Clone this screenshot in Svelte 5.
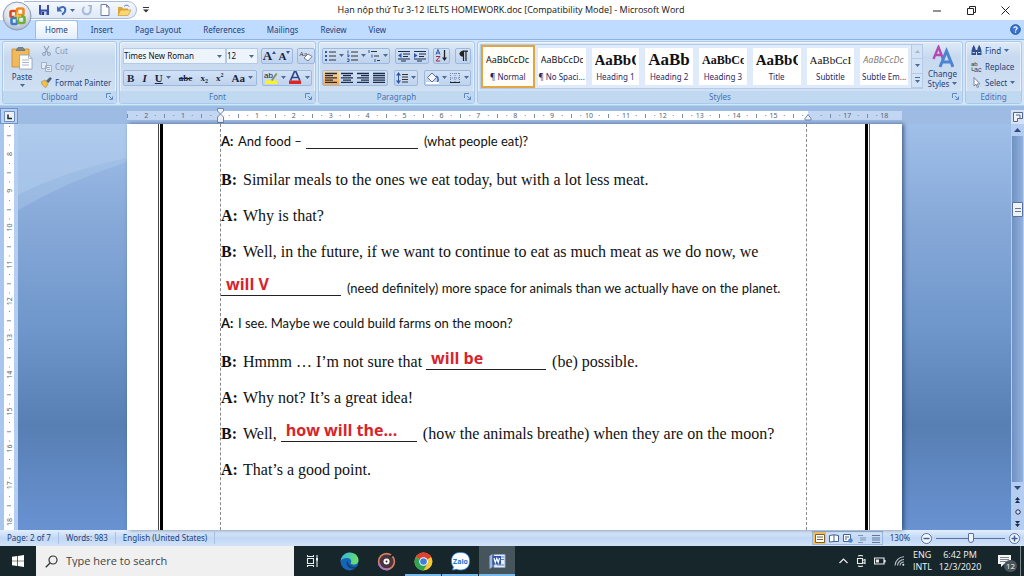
<script lang="ts">
  const tabs = ["Home", "Insert", "Page Layout", "References", "Mailings", "Review", "View"];

  const styles = [
    { sample: "AaBbCcDc", name: "¶ Normal", look: "plain" },
    { sample: "AaBbCcDc", name: "¶ No Spaci...", look: "plain" },
    { sample: "AaBbC", name: "Heading 1", look: "h1" },
    { sample: "AaBb", name: "Heading 2", look: "h2" },
    { sample: "AaBbCc", name: "Heading 3", look: "h3" },
    { sample: "AaBbC", name: "Title", look: "h1" },
    { sample: "AaBbCcI", name: "Subtitle", look: "sub" },
    { sample: "AaBbCcDc", name: "Subtle Em...", look: "em" },
  ];

  // one entry per centimetre, zero sits at the text margin
  const UNIT = 37;
  const hNumbers = [-2, -1, 1, 2, 3, 4, 5, 6, 7, 8, 9, 10, 11, 12, 13, 14, 15, 17, 18];
  const hTicks = Array.from({ length: 82 }, (_, i) => i - 10);
  const vNumbers = [8, 9, 10, 11, 12, 13, 14, 15, 16, 17, 18];
  const vTicks = Array.from({ length: 44 }, (_, i) => i);

  let activeTab = $state("Home");
  let activeStyle = $state(0);
  let font = $state("Times New Roman");
  let size = $state("12");
  let query = $state("");
  let zoom = $state(130);
</script>

{#snippet arrow()}
  <svg class="arrow" viewBox="0 0 5 3" width="5" height="3"><path d="M0 0h5L2.500 3z" fill="#4a6a9c" /></svg>
{/snippet}

{#snippet lines(rows: number[][])}
  <svg viewBox="0 0 14 12" width="14" height="12">
    {#each rows as [x, w], i}
      <path d="M{x} {1.5 + i * 2.2}h{w}" stroke="#1d2b4a" stroke-width="1.3" />
    {/each}
  </svg>
{/snippet}

{#snippet launcher(label: string)}
  <button class="launcher" aria-label={label}>
    <svg viewBox="0 0 7 7" width="7" height="7"><path d="M.5 5V.5H5M3 3l3 3M6.500 3.500v3h-3" fill="none" stroke="#5f86bd" /></svg>
  </button>
{/snippet}

<div class="window">
  <header class="titlebar">
    <button class="office" aria-label="Office Button">
      <svg viewBox="0 0 30 30" width="30" height="30">
        <defs>
          <radialGradient id="orb" cx=".5" cy=".3" r=".7">
            <stop offset="0" stop-color="#fff" />
            <stop offset=".6" stop-color="#dfe5ee" />
            <stop offset="1" stop-color="#a9b6cb" />
          </radialGradient>
        </defs>
        <circle cx="15" cy="15" r="14" fill="url(#orb)" stroke="#8b9bb8" />
        <g fill="none" stroke-width="2.6">
          <rect x="8.500" y="10" width="6" height="6" rx="1.500" stroke="#dd4b1c" />
          <rect x="15" y="7.500" width="6.500" height="6.500" rx="1.500" stroke="#ef8a22" />
          <rect x="9.500" y="17" width="5.500" height="6" rx="1.500" stroke="#3c7cc8" />
          <rect x="16" y="15.500" width="6.500" height="6.500" rx="1.500" stroke="#6fae3a" />
        </g>
        <path d="M12 15h7M15.500 11v8" stroke="#f5c64a" stroke-width="1.400" />
      </svg>
    </button>
    <div class="left">
      <div class="quick">
        <button aria-label="Save">
          <svg viewBox="0 0 12 12" width="12" height="12"><path d="M1 1h10v10H2L1 10z" fill="#3a4fa8" /><path d="M3 1h6v4.500H3z" fill="#e8eefc" /><path d="M3.500 7.500h5V11h-5z" fill="#c6d2ee" /><path d="M4 8h2v3H4z" fill="#27387f" /></svg>
        </button>
        <button aria-label="Undo">
          <svg viewBox="0 0 12 12" width="12" height="12"><path d="M2.500 5.500C5 1.800 9.500 2.500 9.300 6c-.1 2-1.500 3.600-3.300 4.500" fill="none" stroke="#3f6bb8" stroke-width="2" /><path d="M1 2v5.500h5.500z" fill="#3f6bb8" /></svg>
          {@render arrow()}
        </button>
        <button aria-label="Repeat">
          <svg viewBox="0 0 12 12" width="12" height="12"><path d="M3.500 3A4 4 0 1 0 9 4" fill="none" stroke="#a9bad6" stroke-width="2" /><path d="M6.500 1H11v4.500z" fill="#a9bad6" /></svg>
        </button>
        <button aria-label="New">
          <svg viewBox="0 0 12 12" width="12" height="12"><path d="M2 .5h5.500L10 3v8.500H2z" fill="#fff" stroke="#6c7f9f" /><path d="M7.500.5V3H10" fill="none" stroke="#6c7f9f" /></svg>
        </button>
        <button aria-label="Open">
          <svg viewBox="0 0 14 12" width="14" height="12"><path d="M1 3h4l1 1.500h5V11H1z" fill="#e0a536" /><path d="M3.500 6H14l-3 5.500H1z" fill="#fbd774" stroke="#c98d22" stroke-width=".6" /><path d="M7 2.500c2-2 4-1.500 5 0" fill="none" stroke="#4c6ea8" /></svg>
        </button>
      </div>
      <button class="more" aria-label="Customize Quick Access Toolbar">
        <svg viewBox="0 0 6 6" width="6" height="6"><path d="M0 .5h6" stroke="#333" /><path d="M0 2.500h6L3 5.500z" fill="#333" /></svg>
      </button>
    </div>
    <h1>Hạn nộp thứ Tư 3-12 IELTS HOMEWORK.doc [Compatibility Mode] - Microsoft Word</h1>
    <div class="controls">
      <button aria-label="Minimize"><svg viewBox="0 0 9 9" width="9" height="9"><path d="M0 5h8" stroke="#222" /></svg></button>
      <button aria-label="Restore"><svg viewBox="0 0 9 9" width="9" height="9"><path d="M.5 2.500h6v6h-6zM2.500 2.500v-2h6v6h-2" fill="none" stroke="#222" /></svg></button>
      <button aria-label="Close"><svg viewBox="0 0 9 9" width="9" height="9"><path d="M.5.5l8 8M8.500.5l-8 8" stroke="#222" /></svg></button>
    </div>
  </header>

  <nav class="tabs">
    {#each tabs as tab}
      <button class:active={tab === activeTab} onclick={() => (activeTab = tab)}>{tab}</button>
    {/each}
    <button class="help" aria-label="Help">
      <svg viewBox="0 0 11 11" width="11" height="11"><circle cx="5.500" cy="5.500" r="4.800" fill="#3d74cf" stroke="#1f4fa0" /><path d="M3.800 4.300c.2-2 3.400-1.900 3.300 0 0 1.100-1.500 1.100-1.500 2.400M5.500 7.600v1.100" fill="none" stroke="#fff" stroke-width="1.200" /></svg>
    </button>
  </nav>

  <section class="ribbon">
    <div class="group clipboard">
      <div class="body">
        <button class="tall paste">
          <svg viewBox="0 0 22 24" width="22" height="24">
            <path d="M1 3h17v18H1z" fill="#f0b95a" stroke="#c88c34" stroke-width=".8" />
            <path d="M5 4.500 7 1.500h5l2 3z" fill="#7d8793" stroke="#555f6b" stroke-width=".6" />
            <path d="M8.500 9h9l3.500 3.500V23H8.500z" fill="#fff" stroke="#8e9bb3" stroke-width=".8" />
            <path d="M17.500 9v3.500H21M11 14h7M11 16.500h7M11 19h7" fill="none" stroke="#a8b6cd" />
          </svg>
          <span>Paste</span>
          {@render arrow()}
        </button>
        <div class="stack">
          <button class="dim">
            <svg viewBox="0 0 11 11" width="11" height="11"><path d="M3 1l4 7M8 1L4 8" stroke="#8fa0bc" stroke-width="1.200" /><circle cx="3" cy="9" r="1.500" fill="none" stroke="#8fa0bc" /><circle cx="8" cy="9" r="1.500" fill="none" stroke="#8fa0bc" /></svg>
            Cut
          </button>
          <button class="dim">
            <svg viewBox="0 0 11 11" width="11" height="11"><path d="M.5 1.500h5v6h-5zM4.500 4.500h6v6h-6z" fill="#e6ebf3" stroke="#9fb0ca" /><path d="M6 6.500h3M6 8.500h3" stroke="#9fb0ca" /></svg>
            Copy
          </button>
          <button>
            <svg viewBox="0 0 11 11" width="11" height="11"><path d="M0 5l4-2 3 4-2 3.500C3 10 1 8 0 5z" fill="#f0c14c" stroke="#a8772a" stroke-width=".5" /><path d="M5 4l4-4 2 1.500L7.500 6z" fill="#54637c" /></svg>
            Format Painter
          </button>
        </div>
      </div>
      <footer>Clipboard{@render launcher("Clipboard options")}</footer>
    </div>

    <div class="group font">
      <div class="body rows">
        <div class="row">
          <span class="combo">
            <select class="family" aria-label="Font" bind:value={font}>
              <option>Times New Roman</option>
              <option>Calibri</option>
            </select>
            {@render arrow()}
          </span>
          <span class="combo">
            <select class="points" aria-label="Font Size" bind:value={size}>
              <option>12</option>
              <option>14</option>
            </select>
            {@render arrow()}
          </span>
          <div class="set grow">
            <button class="glyph big" aria-label="Grow Font">A<svg viewBox="0 0 4 9" width="4" height="9"><path d="M0 3h4L2 0z" fill="#33518c" /></svg></button>
            <button class="glyph" aria-label="Shrink Font">A<svg viewBox="0 0 4 9" width="4" height="9"><path d="M0 0h4L2 3z" fill="#33518c" /></svg></button>
          </div>
          <div class="set">
            <button aria-label="Clear Formatting">
              <svg viewBox="0 0 14 13" width="14" height="13"><text x="0" y="7" font-size="7" font-family="Liberation Serif" fill="#333">Aa</text><path d="M5 9l4-4 4 2.500-4 4.500z" fill="#fff" stroke="#6d7c98" /></svg>
            </button>
          </div>
        </div>
        <div class="row spread">
          <div class="set wide">
            <button class="glyph"><b>B</b></button>
            <button class="glyph"><i>I</i></button>
            <button class="glyph"><u>U</u>{@render arrow()}</button>
            <button class="glyph small"><s>abc</s></button>
            <button class="glyph small">x<sub>2</sub></button>
            <button class="glyph small">x<sup>2</sup></button>
            <button class="glyph">Aa{@render arrow()}</button>
          </div>
          <div class="set">
            <button aria-label="Text Highlight Color">
              <svg viewBox="0 0 14 13" width="14" height="13"><path d="M1 9.500h12V13H1z" fill="#f7f22c" /><text x="0" y="7" font-size="8" font-family="Liberation Sans" fill="#222">ab</text><path d="M7 9l5-7 1.500 1-5 7z" fill="#8b8f5a" /></svg>
              {@render arrow()}
            </button>
            <button aria-label="Font Color">
              <svg viewBox="0 0 14 13" width="14" height="13"><path d="M1 9.500h12V13H1z" fill="#e02424" /><path d="M2.500 9.500 6.500.5h1.300l4 9M4.500 6.500h5.200" fill="none" stroke="#2e4686" stroke-width="1.700" /></svg>
              {@render arrow()}
            </button>
          </div>
        </div>
      </div>
      <footer>Font{@render launcher("Font options")}</footer>
    </div>

    <div class="group paragraph">
      <div class="body rows">
        <div class="row spread">
          <div class="set">
            <button aria-label="Bullets">
              <svg viewBox="0 0 12 12" width="12" height="12"><path d="M1 2h2M1 6h2M1 10h2" stroke="#2f55a4" stroke-width="2" /><path d="M5 2h7M5 6h7M5 10h7" stroke="#333" /></svg>{@render arrow()}
            </button>
            <button aria-label="Numbering">
              <svg viewBox="0 0 12 12" width="12" height="12"><path d="M2 .5v3M1 5h2v1.500H1.500M1 9h2v2.500H1" fill="none" stroke="#2f55a4" /><path d="M5 2h7M5 6h7M5 10h7" stroke="#333" /></svg>{@render arrow()}
            </button>
            <button aria-label="Multilevel List">
              <svg viewBox="0 0 12 12" width="12" height="12"><path d="M1 0v3M4 4.500v3M7 9v3" stroke="#2f55a4" /><path d="M3 1.500h6M6 6h5M9 10.500h3" stroke="#333" /></svg>{@render arrow()}
            </button>
          </div>
          <div class="set">
            <button aria-label="Decrease Indent">
              <svg viewBox="0 0 14 12" width="14" height="12"><path d="M1 1.500h12M6 4h7M6 6.500h5M1 9h12M4 11h5" stroke="#1d2b4a" /><path d="M4.500 3v5L1 5.500z" fill="#2f55a4" /></svg>
            </button>
            <button aria-label="Increase Indent">
              <svg viewBox="0 0 14 12" width="14" height="12"><path d="M1 1.500h12M6 4h7M6 6.500h5M1 9h12M4 11h5" stroke="#1d2b4a" /><path d="M1 3v5l3.500-2.500z" fill="#2f55a4" /></svg>
            </button>
          </div>
          <div class="set">
            <button aria-label="Sort">
              <svg viewBox="0 0 13 13" width="13" height="13"><path d="M1 5.500 3 0.500l2 5M1.800 4h2.500" fill="none" stroke="#2f55a4" /><path d="M1 7.500h4l-4 4.500h4.200" fill="none" stroke="#a3283c" /><path d="M9.500 1v9" stroke="#222" stroke-width="1.300" /><path d="M7 8.500h5L9.500 12z" fill="#222" /></svg>
            </button>
          </div>
          <div class="set">
            <button aria-label="Show paragraph marks">
              <svg viewBox="0 0 12 12" width="12" height="12"><path d="M6.500 1v10M9 1v10M5.500 1.200H11" stroke="#222" stroke-width="1.200" fill="none" /><path d="M6.500.7v6C1 6.500 1.200.9 6.500.7z" fill="#222" /></svg>
            </button>
          </div>
        </div>
        <div class="row spread">
          <div class="set">
            <button class="on" aria-label="Align Left">{@render lines([[1, 12], [1, 8], [1, 12], [1, 8], [1, 12]])}</button>
            <button aria-label="Center">{@render lines([[1, 12], [3, 8], [1, 12], [3, 8], [1, 12]])}</button>
            <button aria-label="Align Right">{@render lines([[1, 12], [5, 8], [1, 12], [5, 8], [1, 12]])}</button>
            <button aria-label="Justify">{@render lines([[1, 12], [1, 12], [1, 12], [1, 12], [1, 12]])}</button>
          </div>
          <div class="set">
            <button aria-label="Line spacing">
              <svg viewBox="0 0 12 12" width="12" height="12"><path d="M2.500 1v10" stroke="#2f55a4" /><path d="M0 3.500h5L2.500 0zM0 8.500h5L2.500 12z" fill="#2f55a4" /><path d="M6 2.500h6M6 5h6M6 7.500h6M6 10h6" stroke="#333" /></svg>{@render arrow()}
            </button>
          </div>
          <div class="set">
            <button aria-label="Shading">
              <svg viewBox="0 0 13 12" width="13" height="12"><path d="M1.500 5.500 6 1l4.500 4.500L6 10z" fill="#f3f6fb" stroke="#5c6f92" /><path d="M10 4c2 1 2.500 3.500 1.500 6" fill="none" stroke="#3767b5" stroke-width="1.500" /><path d="M0 11h13" stroke="#fff" stroke-width="2" /></svg>{@render arrow()}
            </button>
            <button aria-label="Borders">
              <svg viewBox="0 0 12 12" width="12" height="12"><path d="M1.500 1v9M6 1v9M10.500 1v9M1 1.500h10M1 6h10" stroke="#7286ab" stroke-dasharray="1 1" /><path d="M1 10.500h10" stroke="#222" /></svg>{@render arrow()}
            </button>
          </div>
        </div>
      </div>
      <footer>Paragraph{@render launcher("Paragraph options")}</footer>
    </div>

    <div class="group styles">
      <div class="body">
        <div class="gallery">
          {#each styles as style, i}
            <button class:chosen={i === activeStyle} onclick={() => (activeStyle = i)}>
              <span class="sample {style.look}">{style.sample}</span>
              <span class="name">{style.name}</span>
            </button>
          {/each}
          <div class="scroller">
            <button aria-label="Previous styles"><svg viewBox="0 0 5 3" width="5" height="3"><path d="M0 3h5L2.500 0z" fill="#a9b4c8" /></svg></button>
            <button aria-label="Next styles">{@render arrow()}</button>
            <button aria-label="More styles"><svg viewBox="0 0 5 6" width="5" height="6"><path d="M0 .5h5" stroke="#4a6a9c" /><path d="M0 3h5L2.500 6z" fill="#4a6a9c" /></svg></button>
          </div>
        </div>
        <button class="tall change">
          <svg viewBox="0 0 22 24" width="22" height="24">
            <path d="M1.500 14 6.500 2l4.500 12M3 10h6.500" fill="none" stroke="#b44bb0" stroke-width="2.400" />
            <path d="M8 22 14.500 6 21 22M10.500 17h8" fill="none" stroke="#4c84cf" stroke-width="3" />
          </svg>
          <span>Change</span>
          <span>Styles {@render arrow()}</span>
        </button>
      </div>
      <footer>Styles{@render launcher("Styles options")}</footer>
    </div>

    <div class="group editing">
      <div class="body">
        <div class="stack">
          <button>
            <svg viewBox="0 0 11 11" width="11" height="11"><path d="M1.500 2h2.500l1 4v4H.5V6zM7 2h2.500l1 4v4H6V6z" fill="#31508c" /><path d="M2 .5h1.500v2H2zM7.500.5H9v2H7.500zM4 5h3v2H4z" fill="#31508c" /><path d="M1.500 7.500h2.500M7 7.500h2.500" stroke="#b8cdf0" /></svg>
            Find {@render arrow()}
          </button>
          <button>
            <svg viewBox="0 0 11 11" width="11" height="11"><text x="0" y="5" font-size="6" font-family="Liberation Sans" fill="#333">ab</text><text x="3" y="11" font-size="7" font-family="Liberation Sans" fill="#1f3d7d">ac</text><path d="M1 6.500v3h2" fill="none" stroke="#3a8a46" /></svg>
            Replace
          </button>
          <button>
            <svg viewBox="0 0 11 11" width="11" height="11"><path d="M3 .5v8.500l2-1.800L6.300 10.500l1.300-.6-1.300-3H9z" fill="#fff" stroke="#6d7c98" stroke-width=".9" /></svg>
            Select {@render arrow()}
          </button>
        </div>
      </div>
      <footer>Editing</footer>
    </div>
  </section>

  <div class="ruler-row">
    <button class="tabstop" aria-label="Left tab"><svg viewBox="0 0 11 11" width="11" height="11"><path d="M.5.5h10v10H.5z" fill="#eaf1fb" stroke="#6f8fbf" /><path d="M4 3.500v4h4" fill="none" stroke="#222" stroke-width="1.500" /></svg></button>
    <div class="hruler">
      <svg width="776" height="16" viewBox="0 0 776 16">
        <path d="M0 3h776v9H0z" fill="#c3d6f2" />
        <path d="M93 3h588v9H93z" fill="#fff" />
        {#each hTicks as t}
          {#if t % 4 !== 0}
            <path d="M{93 + (t * UNIT) / 4} {t % 2 ? 7 : 6}v{t % 2 ? 1 : 4}" stroke="#7d8da8" />
          {/if}
        {/each}
        {#each hNumbers as n}
          <text x={93 + n * 36.9} y="10" text-anchor="middle">{Math.abs(n)}</text>
        {/each}
        <path d="M90.500.5h6v2.500L93.500 6l3 3v5.500h-6V9l3-3-3-3z" fill="#eef3fb" stroke="#7286ab" />
        <path d="M678 10.500l3-4 3 4v1.500h-6z" fill="#eef3fb" stroke="#7286ab" />
      </svg>
    </div>
    <button class="view-ruler" aria-label="View Ruler"><svg viewBox="0 0 12 12" width="12" height="12"><path d="M1.500 1.500h9v6h-5v3h-4z" fill="#f1f5fb" stroke="#4f668f" /><path d="M4 4h4v3" fill="none" stroke="#4f668f" /></svg></button>
  </div>

  <main>
    <div class="vruler">
      <svg width="18" height="406" viewBox="0 0 18 406">
        {#each vTicks as t}
          {#if t % 4 !== 3}
            <path d="M{t % 2 ? 7 : 9} {2.5 + (t * UNIT) / 4}h{t % 2 ? 4 : 1}" stroke="#7d8da8" />
          {/if}
        {/each}
        {#each vNumbers as n, i}
          <text transform="translate(12 {30 + i * 36.8}) rotate(-90)" text-anchor="middle">{n}</text>
        {/each}
      </svg>
    </div>
    <div class="canvas">
      <svg class="swoosh" viewBox="0 0 109 90" width="109" height="90">
        <path d="M0 0h109v34Q45 48 0 71z" fill="#b9d4f0" opacity=".55" />
        <path d="M0 71Q45 48 109 34v4Q50 57 0 86z" fill="#b9d4f0" opacity=".3" />
      </svg>
      <article class="page">
        <div class="text">
          <p class="sans"><b>A:</b><span>And food –</span><span class="blank b1"></span><span class="after">(what people eat)?</span></p>
          <p><b>B:</b><span>Similar meals to the ones we eat today, but with a lot less meat.</span></p>
          <p><b>A:</b><span>Why is that?</span></p>
          <p><b>B:</b><span>Well, in the future, if we want to continue to eat as much meat as we do now, we</span></p>
          <p class="sans cont"><span class="blank b2"><em>will V</em></span><span class="after">(need definitely) more space for animals than we actually have on the planet.</span></p>
          <p class="sans"><b>A:</b><span>I see. Maybe we could build farms on the moon?</span></p>
          <p><b>B:</b><span>Hmmm … I’m not sure that</span><span class="blank b2"><em>will be</em></span><span class="after">(be) possible.</span></p>
          <p><b>A:</b><span>Why not? It’s a great idea!</span></p>
          <p><b>B:</b><span>Well,</span><span class="blank b3"><em>how will the...</em></span><span class="after">(how the animals breathe) when they are on the moon?</span></p>
          <p><b>A:</b><span>That’s a good point.</span></p>
        </div>
      </article>
    </div>
    <div class="scrollbar">
      <button aria-label="Scroll up"><svg viewBox="0 0 7 4" width="7" height="4"><path d="M0 4h7L3.500 0z" fill="#2c4a80" /></svg></button>
      <div class="track"><div class="thumb"></div></div>
      <button aria-label="Scroll down"><svg viewBox="0 0 7 4" width="7" height="4"><path d="M0 0h7L3.500 4z" fill="#2c4a80" /></svg></button>
      <button aria-label="Previous Page"><svg viewBox="0 0 5 6" width="5" height="6"><path d="M0 3h5L2.500 0zM0 6h5L2.500 3z" fill="#1a2c50" /></svg></button>
      <button aria-label="Select Browse Object"><svg viewBox="0 0 6 6" width="6" height="6"><circle cx="3" cy="3" r="2.200" fill="#dce8f8" stroke="#1a2c50" /></svg></button>
      <button aria-label="Next Page"><svg viewBox="0 0 5 6" width="5" height="6"><path d="M0 0h5L2.500 3zM0 3h5L2.500 6z" fill="#1a2c50" /></svg></button>
    </div>
  </main>

  <div class="status">
    <button class="info">Page: 2 of 7</button>
    <button class="info">Words: 983</button>
    <button class="info">English (United States)</button>
    <div class="views">
      <button class="on" aria-label="Print Layout"><svg viewBox="0 0 10 9" width="10" height="9"><path d="M.5.5h9v8h-9z" fill="#fff" stroke="#7a6230" /><path d="M2 3h6M2 5.500h6" stroke="#7a6230" /></svg></button>
      <button aria-label="Full Screen Reading"><svg viewBox="0 0 10 9" width="10" height="9"><path d="M.5 1.500 5 .8l4.500.7v6L5 7.500.5 8zM5 1v7" fill="#fff" stroke="#45628f" /></svg></button>
      <button aria-label="Web Layout"><svg viewBox="0 0 10 9" width="10" height="9"><path d="M.5.5h7v7h-7z" fill="#fff" stroke="#45628f" /><path d="M2 3h4M2 5h2" stroke="#45628f" /><circle cx="7.500" cy="6.500" r="2.200" fill="#4f86cf" /></svg></button>
      <button aria-label="Outline"><svg viewBox="0 0 10 9" width="10" height="9"><path d="M1 1.500h5M3 4h6M3 6h6M1 8.500h5" stroke="#7f93b5" /></svg></button>
      <button aria-label="Draft"><svg viewBox="0 0 10 9" width="10" height="9"><path d="M1 1.500h8M1 4h8M1 6h8M1 8.500h8" stroke="#60779f" /></svg></button>
    </div>
    <button class="percent">{zoom}%</button>
    <button class="step" aria-label="Zoom Out" onclick={() => (zoom -= 10)}><svg viewBox="0 0 11 11" width="11" height="11"><circle cx="5.500" cy="5.500" r="5" fill="#f3f8ff" stroke="#54719f" /><path d="M2.500 5.500h6" stroke="#3f5d90" stroke-width="1.500" /></svg></button>
    <input type="range" min="10" max="250" bind:value={zoom} aria-label="Zoom" />
    <button class="step" aria-label="Zoom In" onclick={() => (zoom += 10)}><svg viewBox="0 0 11 11" width="11" height="11"><circle cx="5.500" cy="5.500" r="5" fill="#f3f8ff" stroke="#54719f" /><path d="M2.500 5.500h6M5.500 2.500v6" stroke="#3f5d90" stroke-width="1.500" /></svg></button>
  </div>

  <footer class="taskbar">
    <button class="start" aria-label="Start"><svg viewBox="0 0 12 12" width="12" height="12"><path d="M0 1.700 5.300 1v4.700H0zM6 .9l6-.9v5.700H6zM0 6.300h5.300V11L0 10.300zM6 6.300h6V12l-6-.9z" fill="#fff" /></svg></button>
    <label class="search">
      <svg viewBox="0 0 13 13" width="13" height="13"><circle cx="8" cy="5" r="4" fill="none" stroke="#333" stroke-width="1.200" /><path d="M5 8 .8 12.200" stroke="#333" stroke-width="1.300" /></svg>
      <input type="text" placeholder="Type here to search" bind:value={query} aria-label="Type here to search" />
    </label>
    <div class="apps">
      <button aria-label="Task View"><svg viewBox="0 0 13 12" width="13" height="12"><path d="M1.500 3.500h6v5h-6zM1.500 0v1.500h6V0M1.500 12v-1.500h6V12M11 0v12" fill="none" stroke="#e8ecee" stroke-width="1.100" /><path d="M10 3h2v2.500h-2z" fill="#e8ecee" /></svg></button>
      <button aria-label="Microsoft Edge">
        <svg viewBox="0 0 19 19" width="19" height="19">
          <defs><linearGradient id="edge" x1="0" y1="0" x2="1" y2=".4"><stop offset="0" stop-color="#2fb4e6" /><stop offset="1" stop-color="#6bdc6a" /></linearGradient></defs>
          <circle cx="9.500" cy="9.500" r="9" fill="#1566b8" />
          <path d="M.6 9C1.500 3.500 5.500.5 9.700.5c5.300 0 8.800 3.700 8.800 7.500 0 3-2.300 4.600-4.800 4.600-2 0-3.200-.8-3-1.500 1.300-1.700.2-5-3.400-5C4 6 1.500 7.300.6 9z" fill="url(#edge)" />
          <path d="M7.500 8.500c-2.500 3 .3 9 6.500 8.200 1.400-.4 2.600-1.300 3.300-2.500-4.500 2-9.200-.7-9.800-5.700z" fill="#17262b" opacity=".55" />
        </svg>
      </button>
      <button aria-label="Music">
        <svg viewBox="0 0 19 19" width="19" height="19"><circle cx="9.500" cy="9.500" r="7.900" fill="#4a3440" stroke="#d9825a" stroke-width="1.600" /><path d="M1.800 11a8 8 0 0 0 11 5.800" fill="none" stroke="#a878c8" stroke-width="1.800" /><circle cx="9.500" cy="9.500" r="3" fill="#fff" /><circle cx="9.500" cy="9.500" r="1" fill="#222" /><path d="M13 5l4-3" stroke="#17262b" stroke-width="2" /></svg>
      </button>
      <button class="open" aria-label="Google Chrome">
        <svg viewBox="0 0 19 19" width="19" height="19"><circle cx="9.500" cy="9.500" r="9" fill="#f6c834" /><path d="M9.500 9.500 1.700 5a9 9 0 0 1 15.600 0z" fill="#e0412f" /><path d="M1.700 5A9 9 0 0 0 9.500 18.500l3.700-6.800-3.700-2.200z" fill="#32a352" /><circle cx="9.500" cy="9.500" r="4.300" fill="#fff" /><circle cx="9.500" cy="9.500" r="3.300" fill="#3f7de0" /></svg>
      </button>
      <button class="open" aria-label="Zalo">
        <svg viewBox="0 0 19 19" width="19" height="19"><path d="M9.500.5c6 0 9 3 9 8.500s-3 9-9 9c-1.500 0-2.700-.2-3.800-.7L1.500 18l1-3C1.200 13.500.5 11.500.5 9c0-5.500 3-8.500 9-8.500z" fill="#fff" stroke="#2d8cf0" stroke-width=".8" /><text x="9.500" y="11.500" font-size="7" font-weight="700" text-anchor="middle" font-family="Open Sans" fill="#1a6fd6">Zalo</text></svg>
      </button>
      <button class="open current" aria-label="Word">
        <svg viewBox="0 0 18 17" width="18" height="17"><path d="M6 1.500h11v13H6z" fill="#e9effa" stroke="#8da5d0" /><path d="M13 4h3M13 6.500h3M9 12h7" stroke="#5f7fbc" /><path d="M1.500 3 4.500 1v13l-3 2z" fill="#9db7e4" /><path d="M4.500 3h8.500v8.500H4.500z" fill="#2f57a8" /><path d="M6 5l1.300 4.500L8.800 5.500l1.500 4L11.500 5" fill="none" stroke="#fff" stroke-width="1.200" /></svg>
      </button>
    </div>
    <div class="tray">
      <button aria-label="Show hidden icons"><svg viewBox="0 0 9 6" width="9" height="6"><path d="M.5 5 4.500 1l4 4" fill="none" stroke="#e8ecee" stroke-width="1.200" /></svg></button>
      <button aria-label="Meet Now"><svg viewBox="0 0 10 12" width="10" height="12"><path d="M1.500 3.500h5v5h-5zM6.500 5.500l2.500-1v4l-2.500-1M2 1q2.500-1 5 0M2 11q2.500 1 5 0" fill="none" stroke="#e8ecee" stroke-width="1.100" /></svg></button>
      <button aria-label="Battery"><svg viewBox="0 0 12 8" width="12" height="8"><path d="M.5 1h9.500v6H.5zM11 3v2.500" fill="none" stroke="#e8ecee" stroke-width="1.200" /><path d="M2 2.500h3v3H2z" fill="#e8ecee" /></svg></button>
      <button aria-label="Network"><svg viewBox="0 0 11 10" width="11" height="10"><path d="M1 9.500A9 9 0 0 1 10 .8M3.500 9.500A6.500 6.500 0 0 1 10 3.500M6 9.500a4 4 0 0 1 4-3.500" fill="none" stroke="#b9c2c5" stroke-width="1.100" /><circle cx="9.300" cy="8.800" r="1" fill="#e8ecee" /></svg></button>
      <button class="lang"><span>ENG</span><span>INTL</span></button>
      <button class="clock"><span>6:42 PM</span><span>12/3/2020</span></button>
      <button class="notify" aria-label="Notifications, 12 new">
        <svg viewBox="0 0 13 12" width="13" height="12"><path d="M0 0h13v9H6l-3 3V9H0z" fill="#f1f3f4" /><path d="M2 2.500h9M2 4.500h9M2 6.500h6" stroke="#5f6c72" stroke-width=".8" /></svg>
        <span class="count">12</span>
      </button>
    </div>
  </footer>
</div>

<style>
  :global(body) { margin: 0; }
  .window {
    min-height: 100vh;
    display: flex;
    flex-direction: column;
    background: #bdd8fb;
    color: #1e3f7c;
    font-family: "Noto Sans", "Open Sans", sans-serif;
    font-size: 8px;
    line-height: 12px;
    overflow: hidden;
  }
  button, input, select {
    font: inherit;
    color: inherit;
    border: 0;
    padding: 0;
    margin: 0;
    background: none;
  }
  button {
    display: inline-flex;
    align-items: center;
    justify-content: center;
    white-space: nowrap;
    cursor: pointer;
  }
  svg { flex: none; display: block; }

  .titlebar {
    position: relative;
    display: flex;
    align-items: center;
    height: 20px;
    background: #fff;
  }
  .office {
    position: absolute;
    left: 2px;
    top: 1px;
    z-index: 2;
  }
  .left {
    flex: 1;
    display: flex;
    align-items: center;
    gap: 6px;
  }
  .quick {
    display: flex;
    align-items: center;
    gap: 6px;
    height: 16px;
    margin-left: 24px;
    padding: 0 5px 0 14px;
    border: 1px solid #a9bbd8;
    border-left: 0;
    border-radius: 0 9px 9px 0;
    background: linear-gradient(#f4f8fe, #dde8f7);
  }
  .quick button { gap: 2px; }
  h1 {
    margin: 0;
    color: #111;
    font-family: "Open Sans", sans-serif;
    font-size: 9px;
    font-weight: 400;
    white-space: nowrap;
  }
  .controls {
    flex: 1;
    display: flex;
    justify-content: flex-end;
    padding-right: 2px;
  }
  .controls button { width: 34px; height: 18px; }

  .tabs {
    display: flex;
    align-items: stretch;
    gap: 4px;
    height: 19px;
    padding: 0 3px 0 35px;
    background: #bfdbff;
  }
  .tabs button {
    padding: 0 9px;
    border-radius: 3px 3px 0 0;
  }
  .tabs .active {
    border: 1px solid #9dbbe6;
    border-bottom: 0;
    background: linear-gradient(#fff, #e2edfb);
  }
  .tabs .help { margin-left: auto; padding: 0; }

  .ribbon {
    display: flex;
    gap: 2px;
    padding: 1px 2px;
    background: #d5e5f8;
    border-top: 1px solid #8db2e3;
    border-bottom: 1px solid #a5d5f0;
  }
  .group {
    display: flex;
    flex-direction: column;
    box-sizing: border-box;
    height: 63px;
    border: 1px solid #a9c8ec;
    border-radius: 3px;
    background: linear-gradient(#dfeaf7, #c7d9ef 25%, #cfdff2 75%, #dceafa);
    box-shadow: inset 0 0 0 1px rgba(255, 255, 255, 0.5);
    overflow: hidden;
  }
  .group footer {
    position: relative;
    text-align: center;
    color: #4472b5;
    background: #c1d8f1;
  }
  .launcher {
    position: absolute;
    right: 3px;
    top: 2px;
  }
  .body {
    flex: 1;
    display: flex;
    align-items: center;
  }
  .clipboard { width: 115px; }
  .font { width: 197px; }
  .paragraph { width: 157px; }
  .styles { flex: 1; min-width: 0; }
  .editing { width: 57px; }
  .editing .stack { margin-left: 5px; }
  .tall {
    flex-direction: column;
    line-height: 10px;
  }
  .tall span { display: inline-flex; align-items: center; gap: 3px; }
  .paste { width: 38px; gap: 2px; }
  .stack {
    display: flex;
    flex-direction: column;
    align-items: flex-start;
    gap: 4px;
  }
  .stack button { gap: 3px; }
  .dim { color: #8a97ad; }

  .rows {
    flex-direction: column;
    align-items: stretch;
    justify-content: center;
    gap: 6px;
    padding: 0 3px;
  }
  .row { display: flex; align-items: center; }
  .spread { justify-content: space-between; }
  .combo { position: relative; }
  .combo :global(.arrow) { position: absolute; right: 4px; top: 7px; }
  select {
    appearance: none;
    box-sizing: border-box;
    height: 16px;
    border: 1px solid #b3cae8;
    background: #eef4fc;
    color: #111;
    font-size: 8px;
  }
  .family { width: 103px; }
  .points { width: 32px; }
  .set {
    display: flex;
    height: 14px;
    border: 1px solid #9cb8de;
    border-radius: 2px;
    background: linear-gradient(#d3e2f5, #bfd3ee);
  }
  .set button { gap: 3px; padding: 0 1px; }
  .grow { margin: 0 4px 0 3px; }
  .set.grow button { width: 15px; gap: 0; }
  .wide { flex: 1; justify-content: space-between; margin-right: 5px; padding: 0 2px; }
  .set .on { background: linear-gradient(#fcd59a, #f8a94a); }
  .glyph {
    color: #1a2440;
    font-family: "Liberation Serif", serif;
    font-size: 11px;
    font-weight: 700;
  }
  .glyph.big { font-size: 13px; }
  .set .small { gap: 0; font-size: 9px; }
  .glyph sub, .glyph sup { font-size: 6px; line-height: 6px; }
  .glyph sub { padding-top: 6px; }
  .glyph sup { padding-bottom: 6px; }

  .gallery {
    flex: 1;
    min-width: 0;
    display: flex;
    height: 45px;
    margin-left: 2px;
    border: 1px solid #b3cae8;
    background: #dfeafa;
    box-sizing: border-box;
  }
  .gallery > button {
    flex: 1;
    min-width: 0;
    flex-direction: column;
    align-items: stretch;
    gap: 2px;
    margin: 3px;
    background: #fff;
    overflow: hidden;
  }
  .gallery > .chosen {
    flex-basis: 6px;
    margin: 0;
    border: 2px solid #e2a640;
    background: #fffdf6;
    box-sizing: border-box;
  }
  .sample {
    flex: none;
    height: 18px;
    margin: 0 3px;
    color: #111;
    line-height: 18px;
    text-align: left;
    overflow: hidden;
  }
  .plain { font-size: 9px; }
  .h1, .h2, .h3 { font-family: "Liberation Serif", serif; font-weight: 700; }
  .h1 { font-size: 15px; }
  .h2 { font-size: 17px; }
  .h3 { font-size: 12px; }
  .sub { font-family: "Liberation Serif", serif; font-size: 11px; }
  .em { font-size: 9px; font-style: italic; color: #808080; }
  .name { color: #1f2a66; text-align: center; }
  .scroller {
    flex: none;
    width: 10px;
    display: flex;
    flex-direction: column;
    background: #d3e2f5;
    border-left: 1px solid #b3cae8;
  }
  .scroller button { flex: 1; border-bottom: 1px solid #b3cae8; }
  .change { flex: none; width: 39px; }

  .ruler-row {
    display: flex;
    align-items: flex-end;
    height: 18px;
    background: #9dbbe3;
  }
  .tabstop {
    width: 18px;
    height: 16px;
    box-sizing: border-box;
    border: 1px solid #6f93cb;
    background: #b9d0f0;
  }
  .hruler {
    flex: 1;
    min-width: 0;
    margin: 0 109px;
    height: 16px;
    overflow: hidden;
  }
  .hruler text, .vruler text {
    font-size: 7px;
    fill: #55627a;
  }
  .view-ruler { width: 13px; height: 14px; background: #d7e3f5; }

  main { flex: 1; display: flex; }
  .vruler {
    width: 18px;
    background: linear-gradient(90deg, #a9c6ee 4px, #fff 4px 14px, #b4cdf0 14px);
  }
  .canvas {
    position: relative;
    flex: 1;
    min-width: 0;
    display: flex;
    background: linear-gradient(#a0c0e9, #86a8d8 25%, #6f97cb 50%, #587fb3 74%, #6892d1);
  }
  .swoosh { position: absolute; left: 0; top: 0; }
  .page {
    position: relative;
    flex: 1;
    min-width: 0;
    display: flex;
    margin: 0 109px;
    background:
      linear-gradient(#444, #444) 31px 0 / 1px 100% no-repeat,
      linear-gradient(#000, #000) 33px 0 / 3px 100% no-repeat,
      linear-gradient(#000, #000) right 34px top 0 / 3px 100% no-repeat,
      linear-gradient(#666, #666) right 32px top 0 / 1px 100% no-repeat,
      #fff;
    box-shadow: 2px 0 4px rgba(20, 40, 80, 0.6);
  }
  .text {
    flex: 1;
    min-width: 0;
    margin: 0 95px 0 93px;
    border: 1px dashed #888;
    border-width: 0 1px;
    color: #111;
    font-family: "Liberation Serif", serif;
    font-size: 16px;
  }
  p {
    display: flex;
    margin: 0;
    line-height: 36px;
    white-space: nowrap;
  }
  p b { width: 22px; }
  .sans {
    margin-bottom: 4px;
    font-family: Lato, Carlito, sans-serif;
    font-size: 13px;
    line-height: 34px;
  }
  .sans b { width: 17px; }
  .sans.cont { margin: 0; line-height: 36px; }
  .blank {
    flex: none;
    align-self: center;
    display: flex;
    align-items: center;
    height: 14px;
    margin-left: 4px;
    border-bottom: 1px solid #222;
    line-height: 14px;
  }
  .blank:first-child { margin-left: 0; }
  .b1 { width: 112px; }
  .b2 { width: 120px; }
  .b3 { width: 136px; }
  .after { margin-left: 6px; }
  em {
    padding: 0 0 8px 5px;
    color: #d8232a;
    font-family: "Open Sans", sans-serif;
    font-size: 16px;
    font-style: normal;
    font-weight: 700;
  }

  .scrollbar {
    width: 13px;
    display: flex;
    flex-direction: column;
    background: #b4cdf0;
  }
  .scrollbar button { height: 12px; }
  .track {
    flex: 1;
    margin: 0 1px;
    background: linear-gradient(90deg, #6f91c2, #93b1dc);
  }
  .thumb {
    height: 15px;
    margin-top: 66px;
    border: 1px solid #5b7199;
    border-radius: 1px;
    background:
      linear-gradient(#66748c 1px, transparent 1px 3px, #66748c 3px 4px, transparent 4px) center 5px / 6px 5px no-repeat,
      #eef3f9;
    box-sizing: border-box;
  }

  .status {
    display: flex;
    align-items: center;
    height: 16px;
    background: linear-gradient(#e3eefc, #c0d7f5 50%, #d3e3f8);
  }
  .info {
    padding: 0 7px;
    border-right: 1px solid #a9c1e3;
  }
  .views {
    display: flex;
    gap: 1px;
    margin-left: auto;
    border: 1px solid #9cb8de;
  }
  .views button { width: 13px; height: 12px; }
  .views .on { background: #f9c25f; }
  .percent { width: 34px; }
  input[type="range"] {
    appearance: none;
    width: 69px;
    height: 10px;
    background: linear-gradient(#54719f, #54719f) center / 100% 1px no-repeat;
  }
  input[type="range"]::-webkit-slider-thumb {
    appearance: none;
    width: 6px;
    height: 10px;
    border: 1px solid #54719f;
    border-radius: 1px 1px 3px 3px;
    background: #eef4fc;
  }
  .step { width: 19px; }

  .taskbar {
    display: flex;
    height: 30px;
    background: #17262b;
    color: #f1f3f4;
    font-family: "Open Sans", sans-serif;
    font-size: 9px;
  }
  .start { width: 36px; }
  .search {
    width: 258px;
    display: flex;
    align-items: center;
    gap: 8px;
    padding-left: 9px;
    box-sizing: border-box;
    background: #f1f0f0;
  }
  .search input {
    flex: 1;
    min-width: 0;
    outline: 0;
    color: #333;
    font-size: 11px;
  }
  .search input::placeholder { color: #444; opacity: 1; }
  .apps { display: flex; gap: 1px; }
  .apps button { width: 36px; box-sizing: border-box; }
  .apps .open { border-bottom: 2px solid #76b9ed; padding-top: 2px; }
  .apps .current { background: #46545b; }
  .tray {
    display: flex;
    gap: 8px;
    margin-left: auto;
    padding-right: 3px;
  }
  .lang, .clock { flex-direction: column; }
  .lang { align-items: flex-start; width: 18px; }
  .clock { width: 42px; }
  .notify {
    position: relative;
    width: 32px;
    border-right: 1px solid #7c878b;
  }
  .count {
    position: absolute;
    left: 15px;
    bottom: 4px;
    width: 13px;
    height: 12px;
    border-radius: 6px;
    background: #48545a;
    font-size: 8px;
  }
</style>
